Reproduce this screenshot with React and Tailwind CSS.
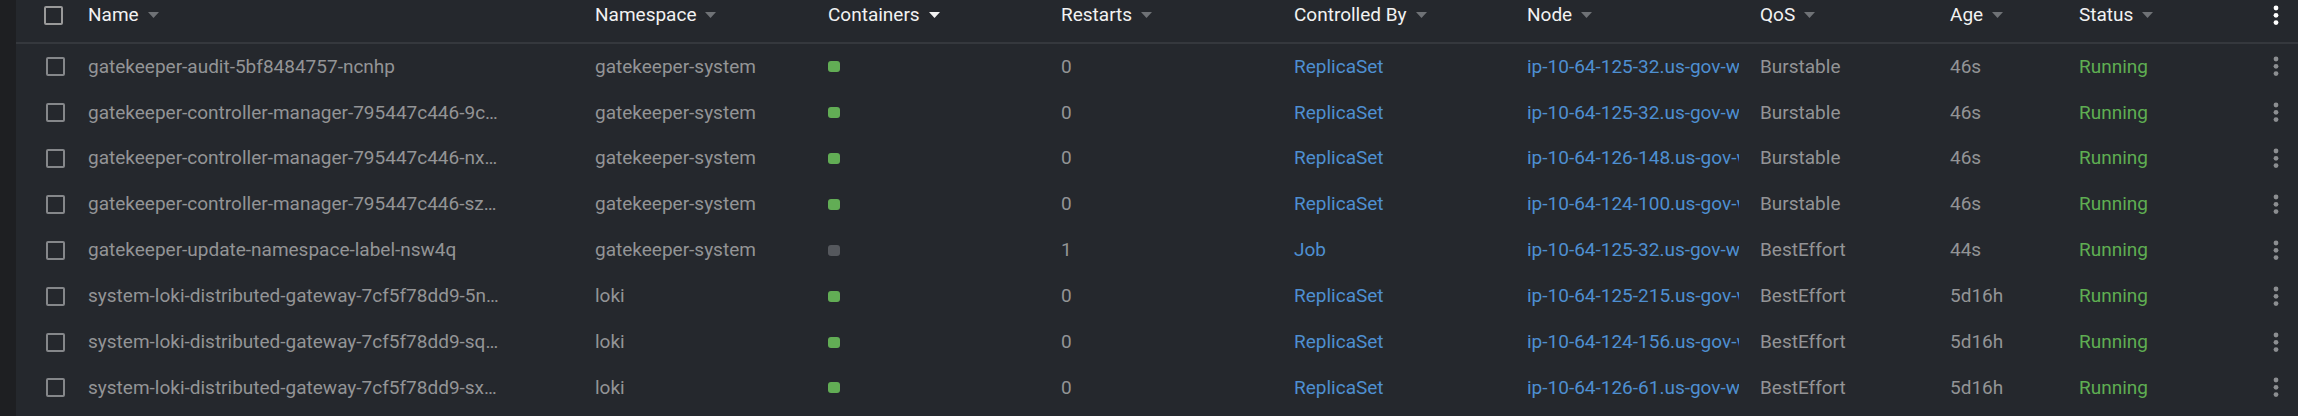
import React from "react";

const rows = [
  { name: "gatekeeper-audit-5bf8484757-ncnhp", ns: "gatekeeper-system", ok: true, restarts: "0", ctrl: "ReplicaSet", node: "ip-10-64-125-32.us-gov-west-1.compute.internal", qos: "Burstable", age: "46s" },
  { name: "gatekeeper-controller-manager-795447c446-9c…", ns: "gatekeeper-system", ok: true, restarts: "0", ctrl: "ReplicaSet", node: "ip-10-64-125-32.us-gov-west-1.compute.internal", qos: "Burstable", age: "46s" },
  { name: "gatekeeper-controller-manager-795447c446-nx…", ns: "gatekeeper-system", ok: true, restarts: "0", ctrl: "ReplicaSet", node: "ip-10-64-126-148.us-gov-west-1.compute.internal", qos: "Burstable", age: "46s" },
  { name: "gatekeeper-controller-manager-795447c446-sz…", ns: "gatekeeper-system", ok: true, restarts: "0", ctrl: "ReplicaSet", node: "ip-10-64-124-100.us-gov-west-1.compute.internal", qos: "Burstable", age: "46s" },
  { name: "gatekeeper-update-namespace-label-nsw4q", ns: "gatekeeper-system", ok: false, restarts: "1", ctrl: "Job", node: "ip-10-64-125-32.us-gov-west-1.compute.internal", qos: "BestEffort", age: "44s" },
  { name: "system-loki-distributed-gateway-7cf5f78dd9-5n…", ns: "loki", ok: true, restarts: "0", ctrl: "ReplicaSet", node: "ip-10-64-125-215.us-gov-west-1.compute.internal", qos: "BestEffort", age: "5d16h" },
  { name: "system-loki-distributed-gateway-7cf5f78dd9-sq…", ns: "loki", ok: true, restarts: "0", ctrl: "ReplicaSet", node: "ip-10-64-124-156.us-gov-west-1.compute.internal", qos: "BestEffort", age: "5d16h" },
  { name: "system-loki-distributed-gateway-7cf5f78dd9-sx…", ns: "loki", ok: true, restarts: "0", ctrl: "ReplicaSet", node: "ip-10-64-126-61.us-gov-west-1.compute.internal", qos: "BestEffort", age: "5d16h" },
];

function Arrow({ active }) {
  return (
    <svg width="11" height="6" viewBox="0 0 11 6" className="ml-[9px] shrink-0">
      <path d="M0 0 L11 0 L5.5 6 Z" fill={active ? "#f2f2f2" : "#6f7276"} />
    </svg>
  );
}

function Kebab({ color }) {
  return (
    <svg width="6" height="21" viewBox="0 0 6 21">
      <circle cx="3" cy="3" r="2.4" fill={color} />
      <circle cx="3" cy="10.3" r="2.4" fill={color} />
      <circle cx="3" cy="17.6" r="2.4" fill={color} />
    </svg>
  );
}

function Head({ label, w, active }) {
  return (
    <div className={`flex items-center shrink-0 ${w}`}>
      <span>{label}</span>
      <Arrow active={active} />
    </div>
  );
}

export default function App() {
  return (
    <div
      className="flex w-[2298px] h-[416px] bg-[#1e1f22] overflow-hidden"
      style={{ fontFamily: "Roboto, 'Noto Sans', sans-serif" }}
    >
      <div className="w-[16px] shrink-0 bg-[#1e1f22]" />
      <div className="flex-1 flex flex-col bg-[#25282d] text-[19px]">
        {/* header */}
        <div className="flex items-center h-[44px] shrink-0 pb-[12px] text-[#f2f2f2] border-b-2 border-[#35383d]">
          <div className="w-[72px] shrink-0 pl-[28px] flex items-center">
            <div className="w-[19px] h-[19px] border-2 border-[#9a9a9a] rounded-[2px]" />
          </div>
          <Head label="Name" w="w-[507px]" />
          <Head label="Namespace" w="w-[233px]" />
          <Head label="Containers" w="w-[233px]" active />
          <Head label="Restarts" w="w-[233px]" />
          <Head label="Controlled By" w="w-[233px]" />
          <Head label="Node" w="w-[233px]" />
          <Head label="QoS" w="w-[190px]" />
          <Head label="Age" w="w-[129px]" />
          <Head label="Status" w="flex-1" />
          <div className="w-[44px] shrink-0 flex justify-center">
            <Kebab color="#ffffff" />
          </div>
        </div>
        {/* rows */}
        {rows.map((r, i) => (
          <div key={i} className="flex items-center h-[45.86px] shrink-0 text-[#939496]">
            <div className="w-[72px] shrink-0 pl-[30px] flex items-center">
              <div className="w-[19px] h-[19px] border-2 border-[#85878a] rounded-[2px]" />
            </div>
            <div className="w-[507px] shrink-0">
              <div className="max-w-[430px] whitespace-nowrap overflow-hidden text-ellipsis">{r.name}</div>
            </div>
            <div className="w-[233px] shrink-0 whitespace-nowrap">{r.ns}</div>
            <div className="w-[233px] shrink-0 flex items-center">
              <div className={`w-[12px] h-[11px] rounded-[3px] ${r.ok ? "bg-[#62ad55]" : "bg-[#55585d]"}`} />
            </div>
            <div className="w-[233px] shrink-0">{r.restarts}</div>
            <div className="w-[233px] shrink-0 text-[#4e8fd1]">{r.ctrl}</div>
            <div className="w-[233px] shrink-0">
              <div className="w-[212px] overflow-hidden whitespace-nowrap text-[#4e8fd1]">{r.node}</div>
            </div>
            <div className="w-[190px] shrink-0">{r.qos}</div>
            <div className="w-[129px] shrink-0">{r.age}</div>
            <div className="flex-1 text-[#5fae52]">Running</div>
            <div className="w-[44px] shrink-0 flex justify-center">
              <Kebab color="#8c8e91" />
            </div>
          </div>
        ))}
      </div>
    </div>
  );
}
